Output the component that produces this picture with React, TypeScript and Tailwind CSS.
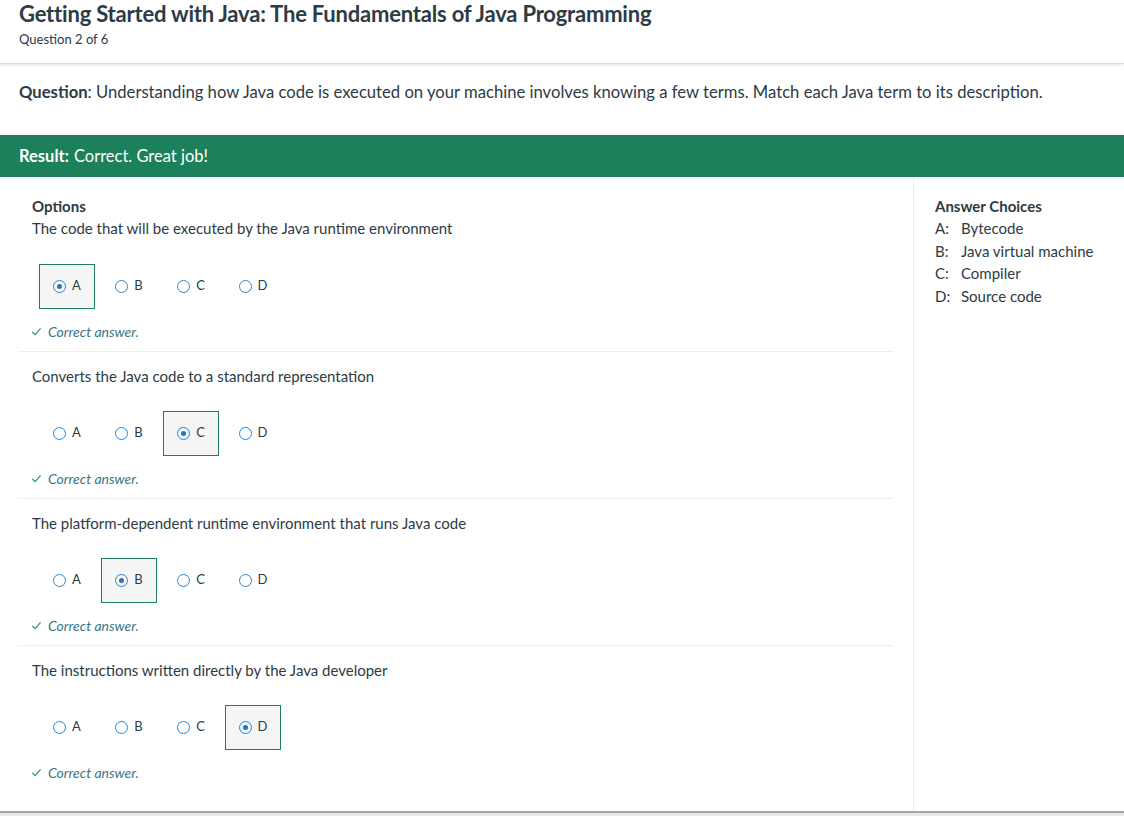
import React from 'react';

const items = [
  { text: 'The code that will be executed by the Java runtime environment', answer: 'A' },
  { text: 'Converts the Java code to a standard representation', answer: 'C' },
  { text: 'The platform-dependent runtime environment that runs Java code', answer: 'B' },
  { text: 'The instructions written directly by the Java developer', answer: 'D' },
];

const choices = [
  ['A', 'Bytecode'],
  ['B', 'Java virtual machine'],
  ['C', 'Compiler'],
  ['D', 'Source code'],
];

const Radio = ({ letter, selected }: { letter: string; selected: boolean }) => (
  <div
    className={`w-[56px] h-[45px] flex items-center justify-center gap-[6px] ${
      selected ? 'bg-[#f5f5f5] border border-[#1f7f59]' : 'border border-transparent'
    }`}
  >
    <span className="w-[13px] h-[13px] rounded-full border-[1.5px] border-[#2b84cf] flex items-center justify-center">
      {selected && <span className="w-[5px] h-[5px] rounded-full bg-[#1f77c4]" />}
    </span>
    <span className="text-[13px] text-[#2d3b45] leading-none -mt-[2px]">{letter}</span>
  </div>
);

const Item = ({ text, answer, first }: { text: string; answer: string; first: boolean }) => (
  <div className={first ? '' : 'border-t border-[#eeeeee]'}>
    <div className={`pl-[14px] ${first ? 'pt-[18px]' : 'pt-[13px]'}`}>
      {first && <div className="text-[15px] font-bold text-[#2d3b45] leading-[22px]">Options</div>}
      <div className="text-[15px] text-[#2d3b45] leading-[22px]">{text}</div>
    </div>
    <div className={`flex gap-[6px] pl-[21px] ${first ? 'mt-[25px]' : 'mt-[24px]'}`}>
      {['A', 'B', 'C', 'D'].map((l) => (
        <Radio key={l} letter={l} selected={l === answer} />
      ))}
    </div>
    <div className="flex items-center gap-[6px] pl-[13px] mt-[13px] h-[18px]">
      <svg width="11" height="11" viewBox="0 0 12 12" fill="none">
        <path d="M1.5 6.5 L4.5 9.5 L10.5 2.5" stroke="#2f9a5c" strokeWidth="1.3" />
      </svg>
      <span className="text-[14px] italic text-[#3a7684]">Correct answer.</span>
    </div>
    <div className="h-[11px]" />
  </div>
);

export default function App() {
  return (
    <div className="w-[1124px] h-[816px] bg-[#e8e8e8] overflow-hidden" style={{ fontFamily: 'Lato, "Open Sans", sans-serif' }}>
      <div className="bg-white h-[813px] border-b-2 border-[#a5a5a5] flex flex-col">
        <div className="h-[64px] px-[19px] border-b border-[#d9d9d9] shadow-[0_1px_3px_rgba(0,0,0,0.12)]">
          <h1 className="text-[22px] font-bold text-[#2d3b45] leading-[28px] tracking-[-0.2px]">
            Getting Started with Java: The Fundamentals of Java Programming
          </h1>
          <div className="text-[13px] text-[#2d3b45] leading-[20px] mt-[1px]">Question 2 of 6</div>
        </div>
        <div className="h-[71px] px-[19px] pt-[16px]">
          <p className="text-[16.65px] leading-[24px] text-[#2d3b45]">
            <span className="font-bold">Question</span>: Understanding how Java code is executed on your machine involves knowing a few terms. Match each Java term to its description.
          </p>
        </div>
        <div className="h-[42px] bg-[#1c805a] px-[19px] flex items-center text-white text-[16.5px]">
          <span className="font-bold mr-[5px]">Result:</span>Correct. Great job!
        </div>
        <div className="flex flex-1">
          <div className="w-[914px] border-r border-[#eeeeee] pl-[18px] pr-[20px]">
            {items.map((it, i) => (
              <Item key={i} text={it.text} answer={it.answer} first={i === 0} />
            ))}
          </div>
          <div className="flex-1 pl-[21px] pt-[18px]">
            <div className="text-[15px] font-bold text-[#2d3b45] leading-[22px]">Answer Choices</div>
            {choices.map(([l, v]) => (
              <div key={l} className="flex text-[15px] text-[#2d3b45] leading-[22.5px]">
                <span className="w-[26px]">{l}:</span>
                <span>{v}</span>
              </div>
            ))}
          </div>
        </div>
      </div>
    </div>
  );
}
